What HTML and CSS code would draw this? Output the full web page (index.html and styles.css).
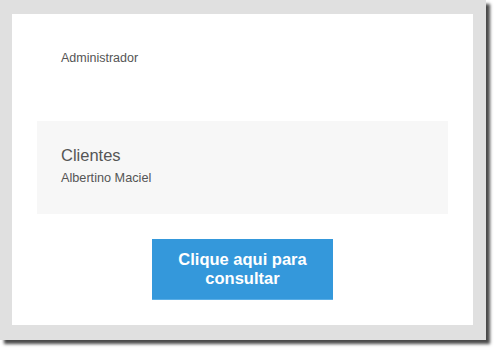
FILE: index.html
```html
<!DOCTYPE html>
<html lang="pt">
<head>
    <meta charset="UTF-8">
    <meta name="viewport" content="width=device-width, initial-scale=1.0">
    <title>Consulta</title>
    <link rel="stylesheet" href="styles.css">
</head>
<body>
    <div class="frame">
        <div class="card">
            <p class="role">Administrador</p>
            <div class="panel">
                <h2>Clientes</h2>
                <p class="name">Albertino Maciel</p>
            </div>
            <div class="actions">
                <a class="btn" href="#">Clique aqui para consultar</a>
            </div>
        </div>
    </div>
</body>
</html>
```

FILE: styles.css
```css
html, body {
    height: 100%;
}
body {
    margin: 0;
    background: #fff;
    font-family: "Liberation Sans", Arial, sans-serif;
    color: #555;
}
.frame {
    width: 461px;
    background: #e0e0e0;
    padding: 14px 13px 15px 12px;
    box-shadow: 4px 4px 3px #4a4a4a;
}
.card {
    background: #fff;
    padding: 37px 25px 25px;
}
.role {
    margin: 0 0 55px 24px;
    font-size: 12.5px;
    line-height: 15px;
}
.panel {
    background: #f7f7f7;
    padding: 24px 24px 28px;
}
.panel h2 {
    margin: 0 0 5px;
    font-size: 16.5px;
    font-weight: normal;
    line-height: 21px;
}
.name {
    margin: 0;
    font-size: 12.7px;
    line-height: 15px;
}
.actions {
    display: flex;
    justify-content: center;
    margin-top: 25px;
}
.btn {
    display: block;
    width: 161px;
    padding: 11px 10px 11px;
    background: #3498db;
    border-bottom: 1px solid #5aaee6;
    color: #fff;
    font-size: 16.5px;
    font-weight: bold;
    line-height: 19px;
    text-align: center;
    text-decoration: none;
}
```
